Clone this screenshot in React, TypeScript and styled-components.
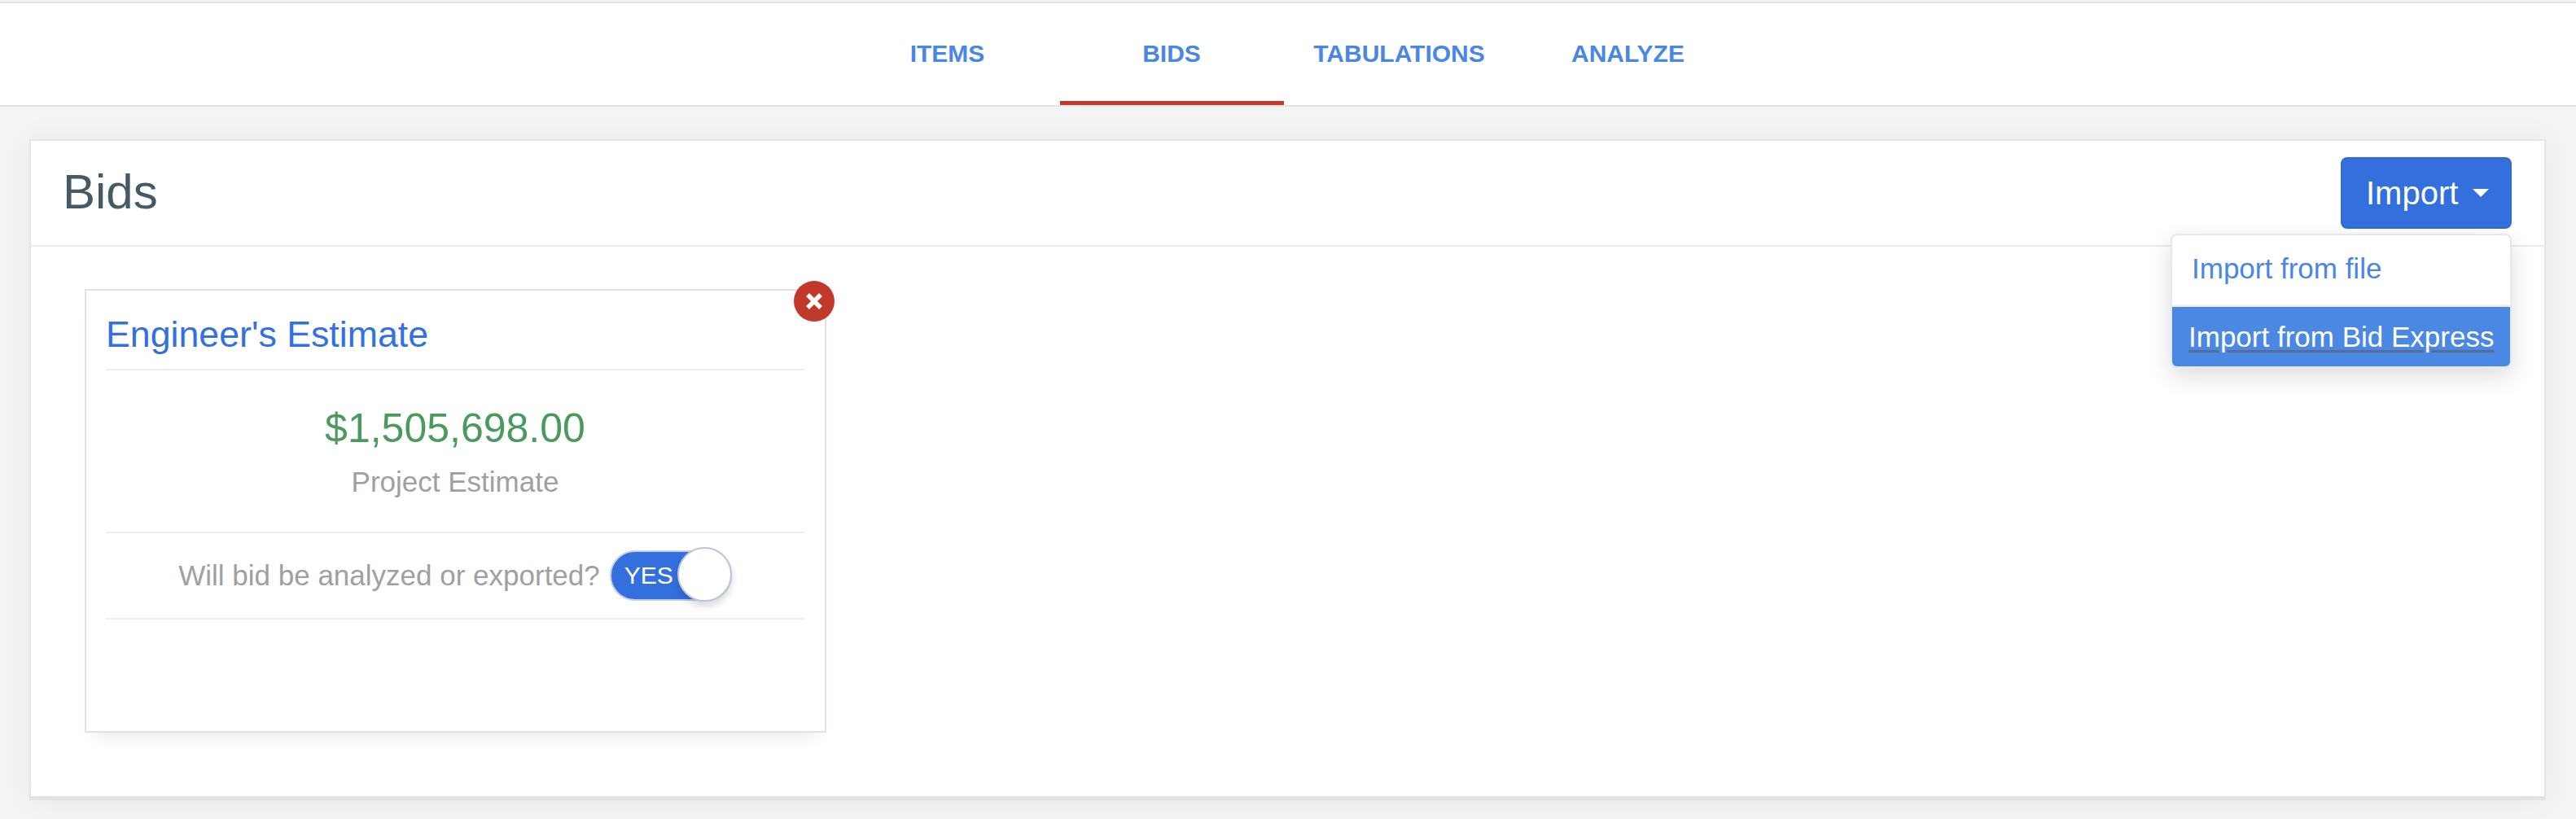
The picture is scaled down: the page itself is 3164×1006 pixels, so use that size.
import styled, { createGlobalStyle } from 'styled-components';

const GlobalStyle = createGlobalStyle`
  html, body {
    margin: 0;
    padding: 0;
    background: #f4f4f4;
    font-family: "Liberation Sans", Arial, sans-serif;
  }
  * {
    box-sizing: border-box;
  }
`;

const Page = styled.div`
  width: 3164px;
  height: 1006px;
  overflow: hidden;
  padding-top: 2px;
`;

const TabBar = styled.nav`
  height: 129px;
  background: #fff;
  border-top: 2px solid #dfe4e9;
  border-bottom: 2px solid #dfe4e9;
  display: flex;
  justify-content: center;
`;

const Tab = styled.a<{ $width: number; $active?: boolean }>`
  width: ${(p) => p.$width}px;
  height: 125px;
  display: flex;
  align-items: center;
  justify-content: center;
  padding-top: 4px;
  font-size: 30px;
  font-weight: 700;
  color: #4a86e4;
  border-bottom: 5px solid ${(p) => (p.$active ? '#c0392b' : 'transparent')};
`;

const Main = styled.main`
  padding: 40px 37px 0 36px;
`;

const Panel = styled.section`
  height: 812px;
  background: #fff;
  border: 2px solid #e0e5ea;
  border-bottom: 5px solid #dee4e9;
  box-shadow: 0 0 36px rgba(0, 0, 0, 0.05);
`;

const PanelHeader = styled.header`
  height: 130px;
  padding: 20px 40px 20px 39px;
  border-bottom: 2px solid #e9ecef;
  display: flex;
  align-items: center;
  justify-content: space-between;
`;

const Title = styled.h1`
  margin: 0 0 4px;
  font-size: 60px;
  font-weight: 400;
  color: #455a64;
`;

const ImportMenu = styled.div`
  position: relative;
`;

const ImportButton = styled.button`
  width: 210px;
  height: 88px;
  padding: 0 0 0 29px;
  display: flex;
  align-items: center;
  gap: 18px;
  font-family: inherit;
  font-size: 40px;
  color: #fff;
  background: #3370dd;
  border: 2px solid #316bd3;
  border-radius: 8px;
`;

const Caret = styled.span`
  width: 0;
  height: 0;
  border-left: 10px solid transparent;
  border-right: 10px solid transparent;
  border-top: 10px solid #fff;
`;

const Dropdown = styled.div`
  position: absolute;
  z-index: 5;
  top: 94px;
  right: 0;
  width: 419px;
  height: 165px;
  background: #fff;
  border: 2px solid #e4e9ed;
  border-radius: 8px;
  overflow: hidden;
  box-shadow: 0 10px 30px rgba(0, 0, 0, 0.14);
`;

const FileItem = styled.a`
  display: block;
  height: 88px;
  padding: 21px 0 0 24px;
  font-size: 35px;
  color: #4a86e4;
  border-bottom: 3px solid #f0f0f0;
`;

const BidExpressItem = styled.a`
  display: block;
  height: 73px;
  padding: 17px 0 0 20px;
  font-size: 35px;
  color: #fff;
  background: #4a88e4;
  text-decoration: underline;
  text-decoration-color: #5b6b92;
  text-decoration-thickness: 3px;
  text-underline-offset: 4px;
`;

const PanelBody = styled.div`
  padding: 52px 0 0 66px;
`;

const Card = styled.article`
  position: relative;
  width: 911px;
  height: 545px;
  padding: 0 25px 0 24px;
  background: #fff;
  border: 2px solid #e2e2e2;
  box-shadow: 0 18px 22px -14px rgba(0, 0, 0, 0.1);
`;

const RemoveButton = styled.button`
  position: absolute;
  top: -12px;
  right: -12px;
  width: 50px;
  height: 50px;
  padding: 0;
  display: flex;
  align-items: center;
  justify-content: center;
  background: #c0392b;
  border: 0;
  border-radius: 50%;
`;

const CardTitle = styled.h2`
  margin: 0;
  height: 98px;
  padding-top: 28px;
  font-size: 44.7px;
  line-height: 52px;
  font-weight: 400;
  color: #3370e0;
  border-bottom: 2px solid #eeeeee;
`;

const Summary = styled.div`
  height: 200px;
  padding-top: 42px;
  text-align: center;
  border-bottom: 2px solid #eeeeee;
`;

const Amount = styled.div`
  font-size: 50px;
  line-height: 58px;
  color: #4a9a5e;
`;

const AmountLabel = styled.div`
  margin-top: 17px;
  font-size: 35px;
  line-height: 40px;
  color: #a0a0a0;
`;

const ToggleRow = styled.div`
  height: 106px;
  display: flex;
  align-items: center;
  justify-content: center;
  gap: 12px;
  border-bottom: 2px solid #eeeeee;
`;

const ToggleLabel = styled.span`
  font-size: 35px;
  color: #a0a0a0;
`;

const Toggle = styled.div`
  position: relative;
  width: 150px;
  height: 62px;
  padding-left: 16px;
  display: flex;
  align-items: center;
  font-size: 30px;
  color: #fff;
  background: #3370dd;
  border: 2px solid #c6d0e2;
  border-radius: 31px;
`;

const Knob = styled.span`
  position: absolute;
  top: -6px;
  right: -2px;
  width: 67px;
  height: 67px;
  background: #fff;
  border: 2px solid #c0c5d5;
  border-radius: 50%;
  box-shadow: 0 6px 10px rgba(0, 0, 0, 0.15);
`;

export default function App() {
  return (
    <>
      <GlobalStyle />
      <Page>
        <TabBar>
          <Tab $width={276}>ITEMS</Tab>
          <Tab $width={275} $active>BIDS</Tab>
          <Tab $width={284}>TABULATIONS</Tab>
          <Tab $width={278}>ANALYZE</Tab>
        </TabBar>
        <Main>
          <Panel>
            <PanelHeader>
              <Title>Bids</Title>
              <ImportMenu>
                <ImportButton>
                  Import
                  <Caret />
                </ImportButton>
                <Dropdown>
                  <FileItem>Import from file</FileItem>
                  <BidExpressItem>Import from Bid Express</BidExpressItem>
                </Dropdown>
              </ImportMenu>
            </PanelHeader>
            <PanelBody>
              <Card>
                <RemoveButton>
                  <svg width="22" height="22" viewBox="0 0 22 22">
                    <path d="M3 3 L19 19 M19 3 L3 19" stroke="#fff" strokeWidth="5.5" fill="none" />
                  </svg>
                </RemoveButton>
                <CardTitle>Engineer's Estimate</CardTitle>
                <Summary>
                  <Amount>$1,505,698.00</Amount>
                  <AmountLabel>Project Estimate</AmountLabel>
                </Summary>
                <ToggleRow>
                  <ToggleLabel>Will bid be analyzed or exported?</ToggleLabel>
                  <Toggle>
                    YES
                    <Knob />
                  </Toggle>
                </ToggleRow>
              </Card>
            </PanelBody>
          </Panel>
        </Main>
      </Page>
    </>
  );
}
